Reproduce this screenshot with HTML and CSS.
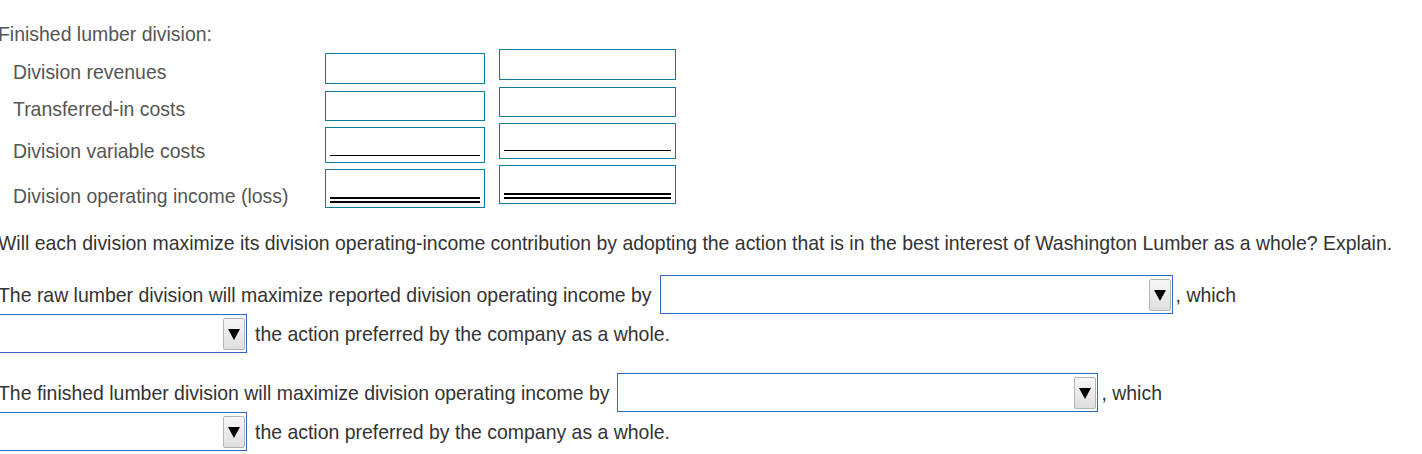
FILE: index.html
```html
<!DOCTYPE html>
<html>
<head>
<meta charset="utf-8">
<link rel="stylesheet" href="styles.css">
</head>
<body>
<div class="page">
  <div class="heading">Finished lumber division:</div>
  <div class="table">
    <div class="row r1">
      <div class="label">Division revenues</div>
      <div class="box left h31"></div>
      <div class="box right h31"></div>
    </div>
    <div class="row r2">
      <div class="label">Transferred-in costs</div>
      <div class="box left h30"></div>
      <div class="box right h30"></div>
    </div>
    <div class="row r3">
      <div class="label">Division variable costs</div>
      <div class="box left h36"><div class="rule single"></div></div>
      <div class="box right h36"><div class="rule single"></div></div>
    </div>
    <div class="row r4">
      <div class="label">Division operating income (loss)</div>
      <div class="box left h39"><div class="rule double"></div></div>
      <div class="box right h39"><div class="rule double"></div></div>
    </div>
  </div>
  <p class="question">Will each division maximize its division operating-income contribution by adopting the action that is in the best interest of Washington Lumber as a whole? Explain.</p>

  <div class="answer first">
    <div class="line">
      <span class="text">The raw lumber division will maximize reported division operating income by</span>
      <span class="select sel-a"><span class="btn"><svg width="12" height="12" viewBox="0 0 12 12"><polygon points="0,1 12,1 6,12" fill="#000"/></svg></span></span>
      <span class="text after">, which</span>
    </div>
    <div class="line">
      <span class="select sel-short"><span class="btn"><svg width="12" height="12" viewBox="0 0 12 12"><polygon points="0,1 12,1 6,12" fill="#000"/></svg></span></span>
      <span class="text follow">the action preferred by the company as a whole.</span>
    </div>
  </div>

  <div class="answer second">
    <div class="line">
      <span class="text">The finished lumber division will maximize division operating income by</span>
      <span class="select sel-b"><span class="btn"><svg width="12" height="12" viewBox="0 0 12 12"><polygon points="0,1 12,1 6,12" fill="#000"/></svg></span></span>
      <span class="text after">, which</span>
    </div>
    <div class="line">
      <span class="select sel-short"><span class="btn"><svg width="12" height="12" viewBox="0 0 12 12"><polygon points="0,1 12,1 6,12" fill="#000"/></svg></span></span>
      <span class="text follow">the action preferred by the company as a whole.</span>
    </div>
  </div>
</div>
</body>
</html>
```

FILE: styles.css
```css
html, body {
  margin: 0;
  padding: 0;
  background: #fff;
}
body {
  font-family: "Liberation Sans", Arial, sans-serif;
  font-size: 19.45px;
  line-height: 20px;
  color: #333;
  overflow: hidden;
}
.page {
  margin-left: -2px;
  padding-top: 24px;
}
.heading {
  color: #555;
  height: 20px;
}
.table {
  margin-top: 5px;
}
.row {
  display: flex;
  align-items: flex-end;
}
.r2 { margin-top: 3px; }
.r3 { margin-top: 2px; }
.r4 { margin-top: 2px; }
.label {
  width: 312px;
  padding-left: 15px;
  padding-bottom: 2px;
  color: #555;
  white-space: nowrap;
}
.box {
  box-sizing: border-box;
  border: 1px solid #0f7b9c;
  display: flex;
  flex-direction: column;
  justify-content: flex-end;
}
.box.left {
  width: 160px;
}
.box.right {
  width: 177px;
  margin-left: 14px;
  margin-bottom: 4px;
}
.h31 { height: 31px; }
.h30 { height: 30px; }
.h36 { height: 36px; }
.h39 { height: 39px; }
.rule {
  margin: 0 4px;
}
.rule.single {
  border-bottom: 1px solid #000;
  margin-bottom: 6px;
}
.box.right .rule.single {
  margin-bottom: 7px;
}
.rule.double {
  border-bottom: 6px double #000;
  margin-bottom: 4px;
}
.question {
  margin: 25px 0 0 0;
  height: 20px;
  white-space: nowrap;
  color: #333;
}
.answer.first {
  margin-top: 22px;
}
.answer.second {
  margin-top: 20px;
}
.line {
  display: flex;
  align-items: center;
  height: 39px;
  white-space: nowrap;
}
.select {
  box-sizing: border-box;
  height: 39px;
  border: 1px solid #2f66c8;
  display: flex;
  align-items: center;
  justify-content: flex-end;
  padding-right: 1px;
  background: #fff;
}
.sel-a {
  width: 513px;
  margin-left: 8px;
}
.sel-b {
  width: 481px;
  margin-left: 8px;
}
.sel-short {
  width: 249px;
}
.btn {
  box-sizing: border-box;
  width: 22px;
  height: 32px;
  border: 1px solid #b3b3b3;
  border-radius: 2px;
  background: linear-gradient(#f7f7f7, #dedede);
  display: flex;
  align-items: center;
  justify-content: center;
}
.btn svg {
  display: block;
}
.after {
  margin-left: 3px;
}
.follow {
  margin-left: 8px;
}
```
